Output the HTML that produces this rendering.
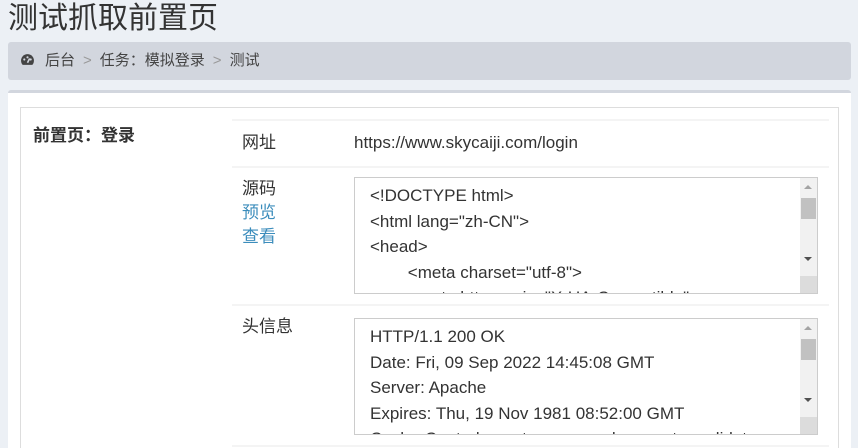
<!DOCTYPE html>
<html><head><meta charset="utf-8"><style>
*{box-sizing:border-box;margin:0;padding:0}
html,body{width:858px;height:448px;overflow:hidden}
body{background:#ecf0f5;font-family:"Liberation Sans","Noto Sans CJK SC",sans-serif;color:#333;position:relative}
.title{position:absolute;left:8px;top:1px;font-size:30px;color:#333;line-height:36px}
.bc{position:absolute;left:8px;top:42px;width:843px;height:38px;background:#d2d6de;border-radius:3px;font-size:15px;line-height:38px;padding-left:12px;color:#444}
.bc .s{color:#999;margin:0 8px}
.box{position:absolute;left:8px;top:90px;width:843px;height:358px;background:#fff;border-top:3px solid #d2d6de;border-radius:3px 3px 0 0;overflow:hidden}
.inner{position:absolute;left:12px;top:14px;width:819px;height:341px;border:1px solid #ddd;border-bottom:none;overflow:hidden}
.lbl{position:absolute;left:12px;top:13px;font-size:17px;font-weight:bold;color:#333}
.line{position:absolute;left:211px;height:2px;background:#f4f4f4}
.t{position:absolute;font-size:17px;line-height:24px}
.a{color:#3c8dbc}
.ta{position:absolute;left:333px;width:464px;height:117px;border:1px solid #ccc;overflow:hidden;font-size:17px;line-height:25.5px;padding:5px 0 0 15px;white-space:pre}
.sb{position:absolute;right:0;top:0;width:17px;height:100%;background:#f1f1f1}
.sb .th{position:absolute;left:1px;top:20px;width:15px;height:21px;background:#c1c1c1}
.sb .up,.sb .dn{position:absolute;left:4px;width:0;height:0;border-left:4px solid transparent;border-right:4px solid transparent}
.sb .up{top:7px;border-bottom:4px solid #a3a3a3}
.sb .dn{top:79px;border-top:4px solid #505050}
.sb .rs{position:absolute;left:0;bottom:0;width:17px;height:17px;background:#dcdcdc}
</style></head><body>
<div class="title">测试抓取前置页</div>
<div class="bc"><svg width="15" height="13" viewBox="0 0 14 12" style="vertical-align:-1px;margin-right:10px"><path d="M7 1A6 6 0 0 0 1 7c0 1.5.5 3 1.5 4h9c1-1 1.5-2.5 1.5-4A6 6 0 0 0 7 1z" fill="#444"/><circle cx="4" cy="6" r="1" fill="#d2d6de"/><circle cx="7" cy="4" r="1" fill="#d2d6de"/><circle cx="10" cy="6" r="1" fill="#d2d6de"/><path d="M7 9l2-4" stroke="#d2d6de" stroke-width="1.5"/></svg>后台<span class="s">&gt;</span>任务：模拟登录<span class="s">&gt;</span>测试</div>
<div class="box">
<div class="inner">
<div class="lbl">前置页：登录</div>
<div class="line" style="top:11px;width:597px"></div>
<div class="t" style="left:221px;top:23px">网址</div>
<div class="t" style="left:333px;top:23px">https://www.skycaiji.com/login</div>
<div class="line" style="top:58px;width:597px"></div>
<div class="t" style="left:221px;top:69px">源码<br><span class="a">预览</span><br><span class="a">查看</span></div>
<div class="ta" style="top:69px">&lt;!DOCTYPE html&gt;
&lt;html lang="zh-CN"&gt;
&lt;head&gt;
        &lt;meta charset="utf-8"&gt;
        &lt;meta http-equiv="X-UA-Compatible"
<div class="sb"><div class="up"></div><div class="th"></div><div class="dn"></div><div class="rs"></div></div></div>
<div class="line" style="top:196px;width:597px"></div>
<div class="t" style="left:221px;top:207px">头信息</div>
<div class="ta" style="top:210px">HTTP/1.1 200 OK
Date: Fri, 09 Sep 2022 14:45:08 GMT
Server: Apache
Expires: Thu, 19 Nov 1981 08:52:00 GMT
Cache-Control: no-store, no-cache, must-revalidate
<div class="sb"><div class="up"></div><div class="th"></div><div class="dn"></div><div class="rs"></div></div></div>
<div class="line" style="top:337px;width:597px"></div>
</div>
</div>
</body></html>
